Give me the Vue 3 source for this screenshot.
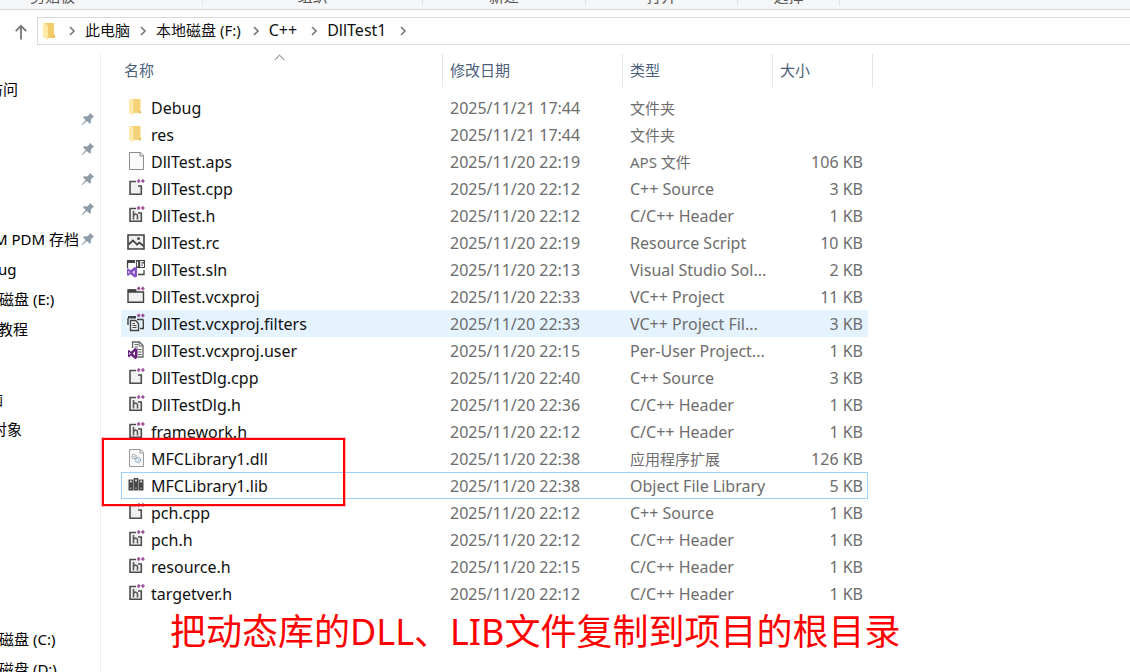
<script setup>
const ribbonGroups = [
  { label: '剪贴板', width: 203, start: true },
  { label: '组织', width: 220 },
  { label: '新建', width: 163 },
  { label: '打开', width: 152 },
  { label: '选择', width: 102 },
]

const crumbs = [
  { label: '此电脑' },
  { label: '本地磁盘 (F:)', kind: 'drive' },
  { label: 'C++', kind: 'latin' },
  { label: 'DllTest1', kind: 'latin' },
]

// shift: how far the tree label is scrolled out past the left edge
const tree = [
  { label: '访问', shift: 12 },
  { label: '', pin: true },
  { label: '', pin: true },
  { label: '', pin: true },
  { label: '', pin: true },
  { label: 'M PDM 存档', shift: 6, pin: true },
  { label: 'ug', shift: 2 },
  { label: '磁盘 (E:)', shift: 1 },
  { label: '教程', shift: 2 },
  { label: '' },
  { label: '脑', shift: 12, section: true },
  { label: '对象', shift: 8 },
  { label: '' },
  { label: '' },
  { label: '' },
  { label: '' },
  { label: '' },
  { label: '' },
  { label: '磁盘 (C:)', shift: 1 },
  { label: '磁盘 (D:)', shift: 1 },
]

const columns = ['名称', '修改日期', '类型', '大小']

const files = [
  { icon: 'folder', name: 'Debug', date: '2025/11/21 17:44', type: '文件夹', size: '', han: true },
  { icon: 'folder', name: 'res', date: '2025/11/21 17:44', type: '文件夹', size: '', han: true },
  { icon: 'blank', name: 'DllTest.aps', date: '2025/11/20 22:19', type: 'APS 文件', size: '106 KB', han: true },
  { icon: 'cpp', name: 'DllTest.cpp', date: '2025/11/20 22:12', type: 'C++ Source', size: '3 KB' },
  { icon: 'h', name: 'DllTest.h', date: '2025/11/20 22:12', type: 'C/C++ Header', size: '1 KB' },
  { icon: 'rc', name: 'DllTest.rc', date: '2025/11/20 22:19', type: 'Resource Script', size: '10 KB' },
  { icon: 'sln', name: 'DllTest.sln', date: '2025/11/20 22:13', type: 'Visual Studio Sol...', size: '2 KB' },
  { icon: 'proj', name: 'DllTest.vcxproj', date: '2025/11/20 22:33', type: 'VC++ Project', size: '11 KB' },
  { icon: 'filters', name: 'DllTest.vcxproj.filters', date: '2025/11/20 22:33', type: 'VC++ Project Fil...', size: '3 KB', state: 'hovered' },
  { icon: 'user', name: 'DllTest.vcxproj.user', date: '2025/11/20 22:15', type: 'Per-User Project...', size: '1 KB' },
  { icon: 'cpp', name: 'DllTestDlg.cpp', date: '2025/11/20 22:40', type: 'C++ Source', size: '3 KB' },
  { icon: 'h', name: 'DllTestDlg.h', date: '2025/11/20 22:36', type: 'C/C++ Header', size: '1 KB' },
  { icon: 'h', name: 'framework.h', date: '2025/11/20 22:12', type: 'C/C++ Header', size: '1 KB' },
  { icon: 'dll', name: 'MFCLibrary1.dll', date: '2025/11/20 22:38', type: '应用程序扩展', size: '126 KB', han: true },
  { icon: 'lib', name: 'MFCLibrary1.lib', date: '2025/11/20 22:38', type: 'Object File Library', size: '5 KB', state: 'focused' },
  { icon: 'cpp', name: 'pch.cpp', date: '2025/11/20 22:12', type: 'C++ Source', size: '1 KB' },
  { icon: 'h', name: 'pch.h', date: '2025/11/20 22:12', type: 'C/C++ Header', size: '1 KB' },
  { icon: 'h', name: 'resource.h', date: '2025/11/20 22:15', type: 'C/C++ Header', size: '1 KB' },
  { icon: 'h', name: 'targetver.h', date: '2025/11/20 22:12', type: 'C/C++ Header', size: '1 KB' },
]
</script>

<template>
  <div class="explorer">
    <header class="ribbon">
      <div v-for="g in ribbonGroups" :key="g.label" class="ribbon-group" :class="{ start: g.start }" :style="{ width: g.width + 'px' }">{{ g.label }}</div>
    </header>

    <div class="address-row">
      <button class="up" aria-label="向上">
        <svg width="14" height="16" viewBox="0 0 14 16"><path d="M7 15.5V2M1.8 7.2 7 1.800l5.200 5.400" fill="none" stroke="#777" stroke-width="1.8" /></svg>
      </button>
      <nav class="address">
        <svg class="address-icon" width="20" height="20" viewBox="0 0 20 20">
          <path d="M6 2h9v15H6z" fill="#f3cd69" /><path d="M4 2h2l3 3v14l-5-3z" fill="#ffe9a6" /><path d="M14 14h2v3h-2z" fill="#e8bd55" />
        </svg>
        <svg class="chevron" width="26" height="12" viewBox="0 0 26 12"><path d="m11 2 4 4-4 4" /></svg>
        <template v-for="c in crumbs" :key="c.label">
          <a href="#" class="crumb" :class="c.kind">{{ c.label }}</a>
          <svg class="chevron" width="26" height="12" viewBox="0 0 26 12"><path d="m11 2 4 4-4 4" /></svg>
        </template>
      </nav>
    </div>

    <div class="body">
      <aside class="tree">
        <ul>
          <li v-for="(t, i) in tree" :key="i" :class="{ section: t.section }">
            <span class="tree-label"><span :style="{ marginLeft: -(t.shift || 0) + 'px' }">{{ t.label }}</span></span>
            <svg v-if="t.pin" class="pin" width="14" height="14" viewBox="0 0 14 14">
              <path d="M8.8.8 13.2 5l-1.7.6-1.7 2.2.1 3-1 .9L5.8 9 1 13.3l-.4-.5L4.7 8 2 5.3l1-1 3 .1 2.4-1.8z" fill="#8e9aa5" />
            </svg>
          </li>
        </ul>
      </aside>

      <main class="content">
        <div class="listing">
          <table>
            <colgroup><col class="c-name" /><col class="c-date" /><col class="c-type" /><col class="c-size" /><col class="c-end" /></colgroup>
            <thead>
              <tr>
                <th v-for="(c, i) in columns" :key="c" scope="col">
                  <button class="sort" :class="{ first: i === 0, last: i === 3 }">{{ c }}</button>
                  <svg v-if="i === 0" class="sorted" width="11" height="7" viewBox="0 0 11 7"><path d="m.8 5.8 4.7-4.6 4.7 4.6" fill="none" stroke="#666" /></svg>
                </th>
                <td class="end"><div></div></td>
              </tr>
            </thead>
            <tbody>
              <tr v-for="f in files" :key="f.name" :class="f.state">
                <td class="name">
                  <div class="file">
                    <svg width="20" height="20" viewBox="0 0 20 20">
                      <template v-if="f.icon === 'folder'">
                        <path d="M6 2h8.500v14H6z" fill="#f5d277" /><path d="M3 2h2.500L7.500 4v14.500L3 16z" fill="#ffe9a9" /><path d="M13 14h2v2.500h-2z" fill="#ecc25f" />
                      </template>
                      <template v-else-if="f.icon === 'blank'">
                        <path d="M3.500 1.500h11l3 3v14h-14z" fill="#fafafa" stroke="#8b8b8b" /><path d="M14 1.500v3.500h3.500" fill="none" stroke="#8b8b8b" />
                      </template>
                      <template v-else-if="f.icon === 'cpp' || f.icon === 'h'">
                        <path d="M4 3h7l4 4v9H4z" fill="#f0eff1" />
                        <path d="M10 3.500H4v12.800h11.300V8H12" fill="none" stroke="#4d4d4d" stroke-width="1.600" />
                        <path v-if="f.icon === 'h'" d="M7.500 6v8.500M7.500 10.500q1-1.500 2.500-1.300t1.500 1.800v3.500" fill="none" stroke="#5a5a5a" stroke-width="1.600" />
                        <path d="M11 3h3.400M12.700 1.300v3.400M15.200 3h3.400M16.900 1.300v3.400" stroke="#9b4f96" stroke-width="1.700" />
                      </template>
                      <template v-else-if="f.icon === 'rc'">
                        <path d="M2 3h16v14H2z" fill="#f0eff1" stroke="#424242" stroke-width="1.600" /><path d="m2.500 12.500 4.500-4 4 4 2.500-2 4 3.500" fill="none" stroke="#424242" stroke-width="1.700" /><circle cx="12.500" cy="6.700" r="1.400" fill="#424242" />
                      </template>
                      <template v-else-if="f.icon === 'sln'">
                        <path d="M1 1h8v3H1z" fill="#424242" /><path d="M1.500 3v6M18 11v4.500h-6" fill="none" stroke="#424242" stroke-width="1.300" /><path d="M10 1h9v8h-9z" fill="#424242" />
                        <path d="M11.500 2.500v5M17.500 2.700h-2.700v4.600h2.600V5h-2.600" fill="none" stroke="#fff" stroke-width="1.200" />
                        <path fill-rule="evenodd" d="m8.500 8 2.500 1v8.500l-2.500 1-4-3.500-2.500 2-1-1v-6l1-.8 2.500 2zM8.500 11.300l-2 2 2 2zM2.400 11.800v2.800l1.400-1.400z" fill="#8551c9" />
                      </template>
                      <template v-else-if="f.icon === 'proj'">
                        <path d="M2 4h16v12H2z" fill="#f0eff1" /><path d="M10 4H2v12.300h15.500V6H2" fill="none" stroke="#424242" stroke-width="1.400" /><path d="M2 3.500h8.500v2.500H2z" fill="#424242" />
                        <path d="M11 2.500h3.400M12.700.8v3.400M15.200 2.500h3.400M16.900.8v3.400" stroke="#9b4f96" stroke-width="1.700" />
                      </template>
                      <template v-else-if="f.icon === 'filters'">
                        <path d="M2 3h8v2.500H2z" fill="#424242" /><path d="M2 5v7M17.300 6.500v9H14M11 6.500h6.300" fill="none" stroke="#424242" stroke-width="1.400" />
                        <path d="M4.500 7.500h5l3 3v7h-8z" fill="#f5f5f5" stroke="#424242" stroke-width="1.400" /><path d="M6.500 10.500h2.500M6.500 12.500h4M6.500 14.500h4" stroke="#424242" />
                        <path d="M11 2.500h3.400M12.700.8v3.400M15.200 2.500h3.400M16.900.8v3.400" stroke="#9b4f96" stroke-width="1.700" />
                      </template>
                      <template v-else-if="f.icon === 'user'">
                        <path d="M6.500 8V2h7l3.500 3.500V17h-5" fill="#f5f5f5" stroke="#666" stroke-width="1.300" /><path d="M13 2v4h4M8.500 4.500H12M8.500 7H12M11.500 9.500h4M12 12h3.500M12 14.500h3.500" fill="none" stroke="#666" />
                        <path fill-rule="evenodd" d="m9 8 2.500 1v9L9 19l-4-3.500L3 17.500l-1-1v-5.800l1-.9 2 1.900zM9 11.300l-2.200 2.200L9 15.700zM3.200 12v3l1.500-1.500z" fill="#68217a" />
                      </template>
                      <template v-else-if="f.icon === 'dll'">
                        <path d="M3.500 1.500h11l3 3v14h-14z" fill="#fafafa" stroke="#9a9a9a" /><path d="M14 1.500v3.500h3.500" fill="none" stroke="#9a9a9a" />
                        <circle cx="8" cy="8.500" r="2.200" fill="none" stroke="#9aa6ae" stroke-width="1.300" stroke-dasharray="1.300 .5" /><circle cx="8" cy="8.500" r=".7" fill="#9aa6ae" /><circle cx="12" cy="12" r="2.500" fill="none" stroke="#7fa6c2" stroke-width="1.300" stroke-dasharray="1.300 .5" /><circle cx="12" cy="12" r=".7" fill="#7fa6c2" />
                      </template>
                      <template v-else>
                        <path d="M2.500 4.500H7.300v11H2.500zM7.700 3h4.600v12.500H7.700zM12.700 4.500h4.800v11h-4.800z" fill="#484848" /><path d="M4 5.500h1.800v2H4zM9.100 4.500h1.800v2H9.100zM14.200 5.500H16v2h-1.800z" fill="#ddd" /><path d="M4 12.500h1.500V14H4zM9.200 12.500h1.500V14H9.200zM14.300 12.500h1.500V14h-1.500z" fill="#999" />
                      </template>
                    </svg>
                    <span>{{ f.name }}</span>
                  </div>
                </td>
                <td>{{ f.date }}</td>
                <td :class="{ han: f.han }">{{ f.type }}</td>
                <td class="size">{{ f.size }}</td>
                <td class="end"></td>
              </tr>
            </tbody>
          </table>
          <div class="marker"></div>
        </div>
        <p class="note">把动态库的DLL、LIB文件复制到项目的根目录</p>
      </main>
    </div>
  </div>
</template>

<style>
html, body { overflow: hidden; }
</style>

<style scoped>
.explorer {
  height: 100vh;
  display: flex;
  flex-direction: column;
  overflow: hidden;
  background: #fff;
  color: #111;
  font: 15px/20px "Noto Sans", "Noto Sans CJK SC", sans-serif;
}
button { margin: 0; padding: 0; border: 0; background: none; font: inherit; color: inherit; }
svg { display: block; flex: none; }

.ribbon {
  flex: none;
  display: flex;
  align-items: flex-end;
  height: 9px;
  overflow: hidden;
  background: #f5f6f7;
  border-bottom: 1px solid #dadbdc;
}
.ribbon-group {
  box-sizing: border-box;
  flex: none;
  height: 20px;
  margin-bottom: 3px;
  text-align: center;
  border-right: 1px solid #e2e3e4;
  color: #555;
}
.ribbon-group.start { text-align: left; padding-left: 30px; }

.address-row { flex: none; display: flex; align-items: center; margin-top: 7px; }
.up { width: 37px; padding-left: 14px; padding-top: 2px; }
.address {
  flex: 1;
  display: flex;
  align-items: center;
  height: 26px;
  border: 1px solid #d9d9d9;
  border-right: 0;
  white-space: nowrap;
}
.address-icon { margin-left: 1px; }
.chevron path { fill: none; stroke: #777; stroke-width: 1.6; }
.crumb { padding-bottom: 2px; color: #111; text-decoration: none; }
.crumb.drive { padding-right: 2px; }
.crumb.latin { padding-right: 4px; font-size: 16px; }

.body { flex: 1; min-height: 0; display: flex; margin-top: 9px; }
.tree { flex: none; width: 100px; border-right: 1px solid #f0f0f0; overflow: hidden; color: #000; }
.tree ul { list-style: none; margin: 0; padding: 20px 0 0; }
.tree li { display: flex; align-items: center; height: 30px; }
.tree li.section { margin-top: 10px; }
.tree-label { width: 78px; margin-right: 3px; overflow: hidden; white-space: nowrap; }

.content { flex: 1; min-width: 0; padding-left: 20px; }
.listing { position: relative; }
table { table-layout: fixed; width: 752px; border-collapse: separate; border-spacing: 0; }
.c-name { width: 322px; }
.c-date { width: 180px; }
.c-type { width: 150px; }
.c-size { width: 95px; }
.c-end { width: 5px; }
th, td { padding: 0; font-weight: 400; text-align: left; white-space: nowrap; }
th { position: relative; height: 40px; vertical-align: top; }
.sort {
  display: block;
  width: 100%;
  height: 33px;
  padding-left: 7px;
  padding-bottom: 2px;
  text-align: left;
  color: #4c607a;
  border-right: 1px solid #e5e5e5;
}
.sort.first { padding-left: 3px; }
.sort.last { border-right: 0; }
thead .end { vertical-align: top; }
thead .end div { height: 33px; border-right: 1px solid #e5e5e5; }
.sorted { position: absolute; top: 0; left: 153px; }

tbody td {
  box-sizing: border-box;
  height: 27px;
  padding-left: 7px;
  padding-top: 1px;
  font-size: 16px;
  color: #6d6d6d;
  border: 0 solid transparent;
  border-width: 1px 0;
}
tbody td.name { padding-left: 4px; color: #111; border-left-width: 1px; }
tbody td.size { padding-right: 4px; text-align: right; border-right-width: 1px; }
tbody td.han { font-size: 15px; }
tbody td.end { padding: 0; }
.file { display: flex; align-items: center; gap: 5px; }
.file svg { margin-bottom: 2px; }
.hovered td:not(.end) { background: #e5f3ff; }
.focused td:not(.end) { border-color: #99d1ff; }

.marker {
  position: absolute;
  left: -19px;
  top: 384px;
  width: 239px;
  height: 64px;
  border: 2px solid #f00;
  box-shadow: 0 0 0 1px rgba(255, 0, 0, 0.25);
}
.note { margin: 0 0 0 49px; font-size: 36px; line-height: 50px; color: #f00; white-space: nowrap; }
</style>
